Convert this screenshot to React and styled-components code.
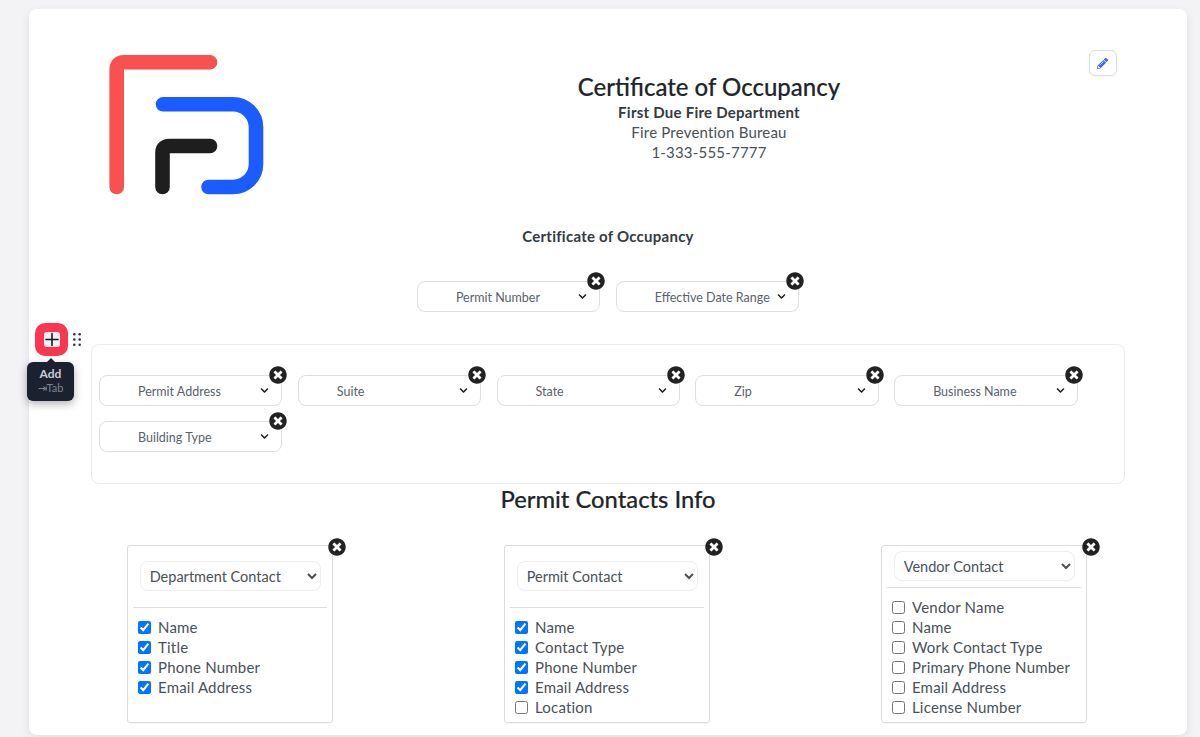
import styled, { createGlobalStyle } from "styled-components";
import { FaChevronDown, FaPencilAlt, FaTimesCircle } from "react-icons/fa";

const GlobalStyle = createGlobalStyle`
    html, body {
        margin: 0;
        height: 100%;
        background: #f3f3f5;
        font-family: "Lato", "Liberation Sans", sans-serif;
        color: #495057;
    }
`;

const filterFields = ["Permit Number", "Effective Date Range"];
const boxFields = ["Permit Address", "Suite", "State", "Zip", "Business Name", "Building Type"];
const contacts = [
    {
        type: "Department Contact",
        top: 15,
        ruleGap: 16,
        fields: [
            ["Name", true],
            ["Title", true],
            ["Phone Number", true],
            ["Email Address", true],
        ],
    },
    {
        type: "Permit Contact",
        top: 15,
        ruleGap: 16,
        fields: [
            ["Name", true],
            ["Contact Type", true],
            ["Phone Number", true],
            ["Email Address", true],
            ["Location", false],
        ],
    },
    {
        type: "Vendor Contact",
        top: 5,
        ruleGap: 6,
        fields: [
            ["Vendor Name", false],
            ["Name", false],
            ["Work Contact Type", false],
            ["Primary Phone Number", false],
            ["Email Address", false],
            ["License Number", false],
        ],
    },
];

function Logo() {
    return (
        <svg width="155" height="140" viewBox="0 0 155 140" fill="none" strokeWidth="14.6" strokeLinecap="round">
            <path d="M7.7 132V14.5Q7.7 7.3 15 7.3H101" stroke="#f95050" />
            <path d="M54 49.3H124A23 23 0 0 1 147 72.3V109A23 23 0 0 1 124 132H99.5" stroke="#1a5cff" />
            <path d="M53.5 132V98Q53.5 91 60.5 91H101" stroke="#1e1e1e" />
        </svg>
    );
}

function RemoveButton() {
    return (
        <Remove>
            <FaTimesCircle size={18} />
        </Remove>
    );
}

function FieldChip({ label }) {
    return (
        <Chip>
            <ChipSelect defaultValue={label}>
                <option>{label}</option>
            </ChipSelect>
            <ChipArrow>
                <FaChevronDown size={9} />
            </ChipArrow>
            <RemoveButton />
        </Chip>
    );
}

function ContactCard({ contact }) {
    return (
        <ContactBox $top={contact.top}>
            <ContactSelect defaultValue={contact.type}>
                <option>{contact.type}</option>
            </ContactSelect>
            <Rule $gap={contact.ruleGap} />
            <FieldList>
                {contact.fields.map(([name, checked]) => (
                    <FieldRow key={name}>
                        <input type="checkbox" defaultChecked={checked} />
                        {name}
                    </FieldRow>
                ))}
            </FieldList>
            <RemoveButton />
        </ContactBox>
    );
}

export default function App() {
    return (
        <Page>
            <GlobalStyle />
            <Card>
                <Header>
                    <Logo />
                    <Heading>
                        <Title>Certificate of Occupancy</Title>
                        <Department>First Due Fire Department</Department>
                        <InfoLine>Fire Prevention Bureau</InfoLine>
                        <InfoLine>1-333-555-7777</InfoLine>
                    </Heading>
                    <EditButton>
                        <FaPencilAlt size={11} />
                    </EditButton>
                </Header>

                <SectionTitle>Certificate of Occupancy</SectionTitle>
                <FilterRow>
                    {filterFields.map((field) => (
                        <FieldChip key={field} label={field} />
                    ))}
                </FilterRow>

                <BlockTools>
                    <AddButton>
                        <PlusBox>
                            <svg width="16" height="15" viewBox="0 0 16 15" stroke="#16181d" strokeWidth="1.6" strokeLinecap="round">
                                <path d="M8 1.5v12M2 7.5h12" />
                            </svg>
                        </PlusBox>
                    </AddButton>
                    <svg width="8" height="13" viewBox="0 0 8 13" fill="#2b2f36">
                        <circle cx="1.3" cy="1.3" r="1.25" />
                        <circle cx="6.7" cy="1.3" r="1.25" />
                        <circle cx="1.3" cy="6.5" r="1.25" />
                        <circle cx="6.7" cy="6.5" r="1.25" />
                        <circle cx="1.3" cy="11.7" r="1.25" />
                        <circle cx="6.7" cy="11.7" r="1.25" />
                    </svg>
                    <Tooltip>
                        <TooltipLabel>Add</TooltipLabel>
                        <TooltipKey>⇥Tab</TooltipKey>
                    </Tooltip>
                </BlockTools>

                <FieldsBox>
                    {boxFields.map((field) => (
                        <FieldChip key={field} label={field} />
                    ))}
                </FieldsBox>

                <ContactsTitle>Permit Contacts Info</ContactsTitle>
                <ContactsRow>
                    {contacts.map((contact) => (
                        <ContactCard key={contact.type} contact={contact} />
                    ))}
                </ContactsRow>
            </Card>
        </Page>
    );
}

const Page = styled.div`
    height: 737px;
    overflow: hidden;
    padding: 9px 13px 0 29px;
    box-sizing: border-box;
`;

const Card = styled.div`
    position: relative;
    height: 726px;
    box-sizing: border-box;
    background: #fff;
    border-radius: 8px;
    box-shadow: 0 3px 10px rgba(0, 0, 0, 0.08);
    padding-top: 46px;
`;

const Header = styled.div`
    display: grid;
    grid-template-columns: 440px 320px 1fr;
    align-items: start;
    padding: 0 70px 0 80px;
    height: 140px;
`;

const Heading = styled.div`
    margin-top: 17px;
    text-align: center;
`;

const Title = styled.h1`
    margin: 0 0 1px;
    font-size: 24px;
    line-height: 29px;
    font-weight: 500;
    color: #212529;
    -webkit-text-stroke: 0.15px #212529;
`;

const Department = styled.div`
    font-size: 15px;
    line-height: 20px;
    font-weight: 700;
    letter-spacing: 0.25px;
    color: #343a40;
`;

const InfoLine = styled.div`
    font-size: 15px;
    line-height: 20px;
    letter-spacing: 0.2px;
    color: #495057;
`;

const EditButton = styled.button`
    justify-self: end;
    margin-top: -5px;
    width: 28px;
    height: 26px;
    padding: 1px 2px 0 0;
    display: flex;
    align-items: center;
    justify-content: center;
    background: #fff;
    color: #2f6bff;
    border: 1px solid #dcdcdc;
    border-radius: 6px;
    box-shadow: 0 2px 4px rgba(0, 0, 0, 0.04);
`;

const SectionTitle = styled.h2`
    margin: 31px 0 0;
    font-size: 15px;
    line-height: 20px;
    font-weight: 700;
    letter-spacing: 0.25px;
    color: #343a40;
    text-align: center;
`;

const FilterRow = styled.div`
    display: flex;
    justify-content: center;
    gap: 15.4px;
    margin-top: 35px;
`;

const Chip = styled.div`
    position: relative;
    width: 183.4px;
    height: 31px;
`;

const ChipSelect = styled.select`
    appearance: none;
    width: 100%;
    height: 100%;
    box-sizing: border-box;
    padding: 1px 24px 0 38px;
    font-family: inherit;
    font-size: 12.5px;
    color: #5a5f69;
    background: #fff;
    border: 1px solid #dedede;
    border-radius: 8px;
    outline: none;
`;

const ChipArrow = styled.span`
    position: absolute;
    top: 11px;
    right: 13px;
    display: block;
    line-height: 0;
    color: #16181d;
    pointer-events: none;
`;

const Remove = styled.span`
    position: absolute;
    top: -9px;
    right: -5px;
    width: 18px;
    height: 18px;
    display: block;
    border-radius: 50%;
    background: #fff;
    color: #222;
    line-height: 0;
`;

const FieldsBox = styled.div`
    display: flex;
    flex-wrap: wrap;
    align-content: flex-start;
    gap: 15px 15.4px;
    width: 1034px;
    height: 140px;
    box-sizing: border-box;
    margin: 32px 0 0 62px;
    padding: 30px 7px 0;
    border: 1px solid #ececec;
    border-radius: 8px;
`;

const BlockTools = styled.div`
    position: absolute;
    top: 314px;
    left: 6px;
    display: flex;
    align-items: center;
    gap: 5px;
`;

const AddButton = styled.div`
    width: 33px;
    height: 33px;
    display: flex;
    align-items: center;
    justify-content: center;
    background: #fb3650;
    border-radius: 10px;
`;

const PlusBox = styled.div`
    width: 16px;
    height: 15px;
    display: flex;
    background: #eef0f3;
    border-radius: 3px;
`;

const Tooltip = styled.div`
    position: absolute;
    top: 39px;
    left: -8px;
    width: 47px;
    height: 39px;
    box-sizing: border-box;
    padding-top: 4px;
    text-align: center;
    background: #1c2130;
    border-radius: 6px;
    box-shadow: 0 3px 8px rgba(0, 0, 0, 0.3);

    &::before {
        content: "";
        position: absolute;
        top: -4px;
        left: 20px;
        border: 4px solid transparent;
        border-top: 0;
        border-bottom-color: #1c2130;
    }
`;

const TooltipLabel = styled.div`
    font-size: 12px;
    line-height: 15px;
    font-weight: 700;
    color: #c9ced8;
`;

const TooltipKey = styled.div`
    font-size: 11px;
    line-height: 14px;
    color: #7d8494;
`;

const ContactsTitle = styled.h2`
    margin: 1px 0 0;
    font-size: 23.75px;
    line-height: 29px;
    font-weight: 500;
    color: #212529;
    -webkit-text-stroke: 0.15px #212529;
    text-align: center;
`;

const ContactsRow = styled.div`
    display: flex;
    gap: 170.6px;
    margin-top: 31px;
    padding-left: 98px;
`;

const ContactBox = styled.div`
    position: relative;
    width: 206.4px;
    height: 178px;
    box-sizing: border-box;
    padding: ${(props) => props.$top}px 5px 0;
    border: 1px solid #dcdcdc;
    border-radius: 3px;
    box-shadow: 0 1px 1px rgba(0, 0, 0, 0.04);

    ${Remove} {
        top: -8px;
        right: -14px;
    }
`;

const ContactSelect = styled.select`
    display: block;
    width: 181px;
    height: 30px;
    margin: 0 0 0 6.7px;
    padding: 0 4px 0 5px;
    font-family: inherit;
    font-size: 14.5px;
    color: #495057;
    background: #fff;
    border: 1px solid #eeeeee;
    border-radius: 8px;
    outline: none;
`;

const Rule = styled.hr`
    margin: ${(props) => props.$gap}px 0 0;
    border: 0;
    border-top: 1px solid #dedede;
`;

const FieldList = styled.div`
    margin-top: 9px;
`;

const FieldRow = styled.label`
    display: flex;
    align-items: center;
    height: 20px;
    font-size: 15px;
    line-height: 20px;
    letter-spacing: 0.2px;
    color: #495057;

    input {
        width: 13px;
        height: 13px;
        margin: 0 7px 0 5px;
    }
`;
